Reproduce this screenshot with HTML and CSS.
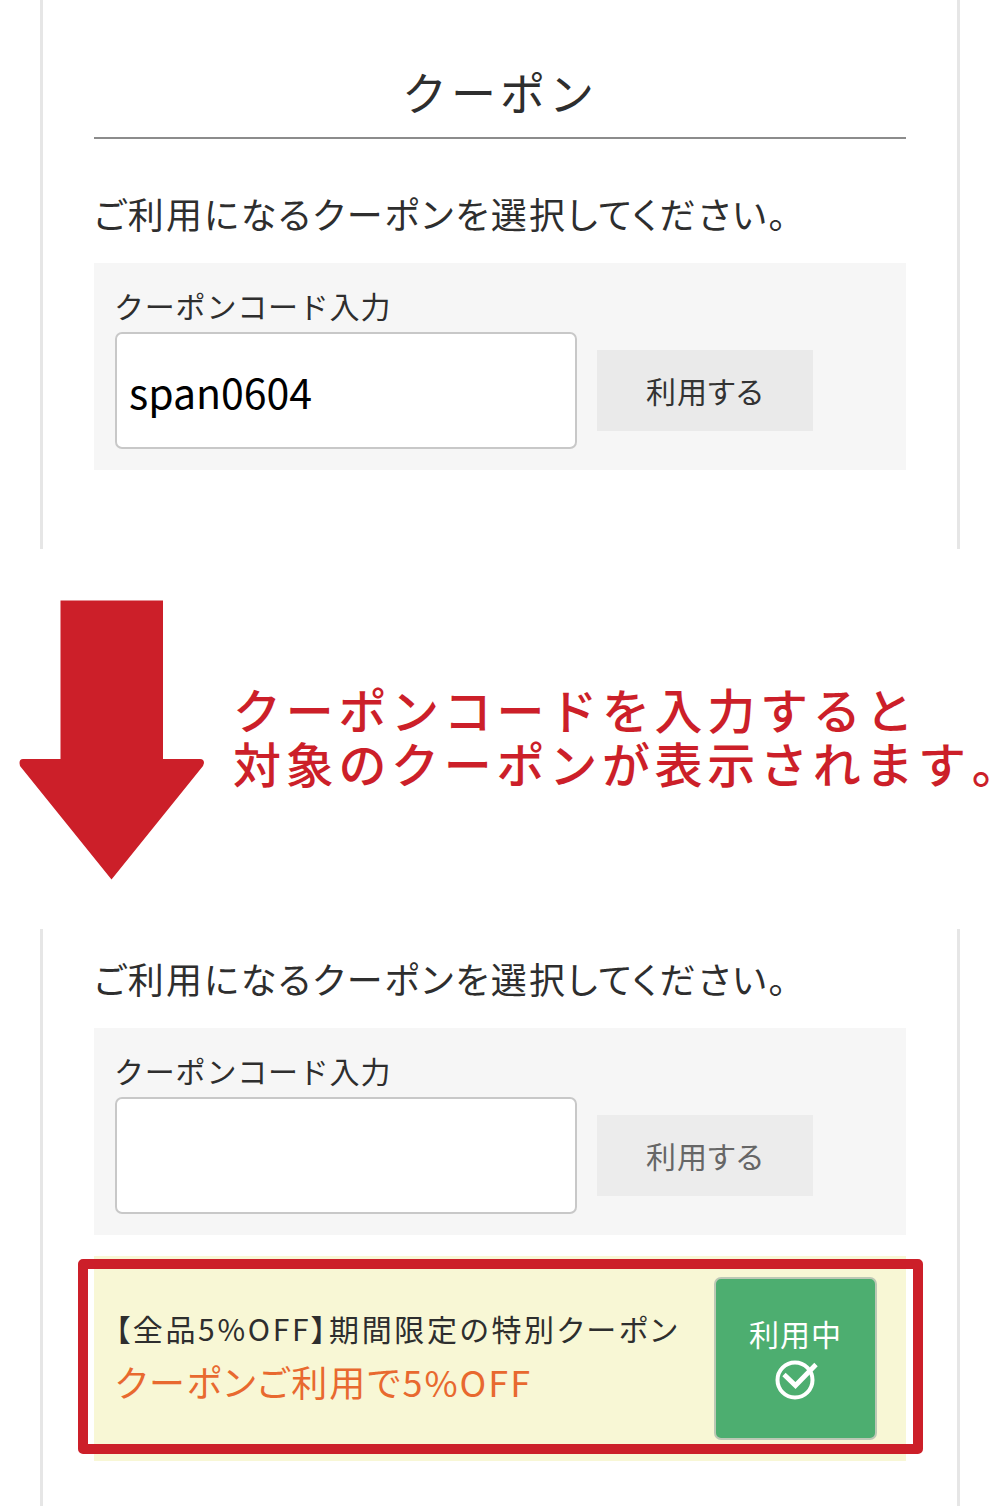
FILE: index.html
```html
<!DOCTYPE html>
<html lang="ja">
<head>
  <meta charset="UTF-8" />
  <meta name="viewport" content="width=device-width, initial-scale=1.0"/>
  <title>クーポン</title>
  <link rel="stylesheet" href="styles.css">
</head>
<body>

  <section class="screen screen-before">
    <h1>クーポン</h1>
    <p class="lead">ご利用になるクーポンを選択してください。</p>
    <form class="code-box">
      <label for="code">クーポンコード入力</label>
      <div class="code-row">
        <input type="text" id="code" value="span0604" />
        <button type="button" class="use-button">利用する</button>
      </div>
    </form>
  </section>

  <div class="guide">
    <svg class="arrow" width="186" height="280" viewBox="0 0 186 280">
      <path d="M41.5 .5H144V159H181Q185 159 185 163L184 166L92.500 279.500L1 166L.5 163Q.5 159 4 159H41.500Z" fill="#cc1f29"/>
    </svg>
    <p class="guide-text">クーポンコードを入力すると<br>対象のクーポンが表示されます<span class="stop">。</span></p>
  </div>

  <section class="screen screen-after">
    <p class="lead">ご利用になるクーポンを選択してください。</p>
    <form class="code-box">
      <label for="code2">クーポンコード入力</label>
      <div class="code-row">
        <input type="text" id="code2" />
        <button type="button" class="use-button muted">利用する</button>
      </div>
    </form>
    <div class="coupon">
      <div class="coupon-info">
        <p class="coupon-name">【全品5%OFF】期間限定の特別クーポン</p>
        <p class="coupon-detail">クーポンご利用で5%OFF</p>
      </div>
      <button type="button" class="active-button">
        <span>利用中</span>
        <svg width="44" height="40" viewBox="0 0 44 40" fill="none" stroke="#fff">
          <circle cx="21" cy="20" r="17.500" stroke-width="4"/>
          <path d="M10 14.500L21.500 25.500L42 4.500" stroke-width="4.800"/>
        </svg>
      </button>
      <div class="highlight"></div>
    </div>
  </section>

</body>
</html>
```
FILE: styles.css
```css
* {
  box-sizing: border-box;
}

body {
  font-family: "Noto Sans CJK JP", sans-serif;
  background-color: #fff;
  color: #2e2e2e;
  margin: 0;
  height: 1506px;
  overflow: hidden;
}

h1, p {
  margin: 0;
  font-weight: 400;
  white-space: nowrap;
}

.screen {
  width: 920px;
  margin: 0 auto;
  padding: 0 51px;
  border-left: 3px solid #e6e6e6;
  border-right: 3px solid #e6e6e6;
}

.screen-before {
  height: 549px;
  padding-top: 56px;
}

.screen-after {
  height: 577px;
  padding-top: 20px;
}

h1 {
  height: 83px;
  border-bottom: 2px solid #8c8c8c;
  font-size: 45px;
  line-height: 71px;
  letter-spacing: 4px;
  text-align: center;
}

.lead {
  font-size: 36px;
  line-height: 59px;
  letter-spacing: 2.1px;
  font-feature-settings: "palt";
}

.screen-before .lead {
  margin-top: 45px;
}

.code-box {
  height: 207px;
  margin-top: 20px;
  padding: 24px 21px 0;
  background-color: #f6f6f6;
}

.code-box label {
  display: block;
  margin-left: -1px;
  font-size: 30px;
  line-height: 36px;
  letter-spacing: 0.800px;
}

.code-row {
  display: flex;
  align-items: center;
  gap: 20px;
  margin-top: 9px;
}

.code-row input {
  width: 462px;
  height: 117px;
  padding: 0 12px;
  border: 2px solid #c8c8c8;
  border-radius: 7px;
  background-color: #fff;
  color: #000;
  font-family: inherit;
  font-size: 41px;
}

.use-button {
  width: 216px;
  height: 81px;
  padding: 0 0 2px;
  border: none;
  background-color: #eaeaea;
  color: #333;
  font-family: inherit;
  font-size: 30px;
  letter-spacing: 1px;
  font-feature-settings: "palt";
}

.use-button.muted {
  background-color: #ececec;
  color: #666;
}

.guide {
  display: flex;
  height: 380px;
  padding: 51px 0 0 19px;
}

.arrow {
  flex-shrink: 0;
}

.guide-text {
  margin: 81px 0 0 28px;
  color: #cc1f29;
  font-size: 48px;
  font-weight: 500;
  line-height: 54px;
  letter-spacing: 4.700px;
}

.stop {
  margin-left: 1px;
  letter-spacing: 0;
  font-feature-settings: "halt";
}

.coupon {
  position: relative;
  display: flex;
  justify-content: space-between;
  height: 205px;
  margin-top: 21px;
  padding: 21px 29px 0 21px;
  background-color: #f8f7d5;
}

.coupon-info {
  padding-top: 26px;
}

.coupon-name {
  font-size: 30px;
  line-height: 50px;
  letter-spacing: 2.700px;
  font-feature-settings: "palt";
}

.coupon-detail {
  color: #e8692f;
  font-size: 36px;
  line-height: 56px;
  letter-spacing: 2px;
  font-feature-settings: "palt";
}

.active-button {
  display: flex;
  flex-direction: column;
  align-items: center;
  width: 163px;
  height: 163px;
  padding: 30px 0 0;
  border: 2px solid #bcc8b5;
  border-radius: 7px;
  background-color: #4dae70;
  color: #fff;
  font-family: inherit;
  font-size: 30px;
  line-height: 48px;
  letter-spacing: 1px;
}

.active-button svg {
  margin-top: 3px;
}

/* red frame around the applied coupon */
.highlight {
  position: absolute;
  top: 3px;
  left: -16px;
  width: 845px;
  height: 195px;
  border: 10px solid #cc1f29;
  border-radius: 5px;
}
```
